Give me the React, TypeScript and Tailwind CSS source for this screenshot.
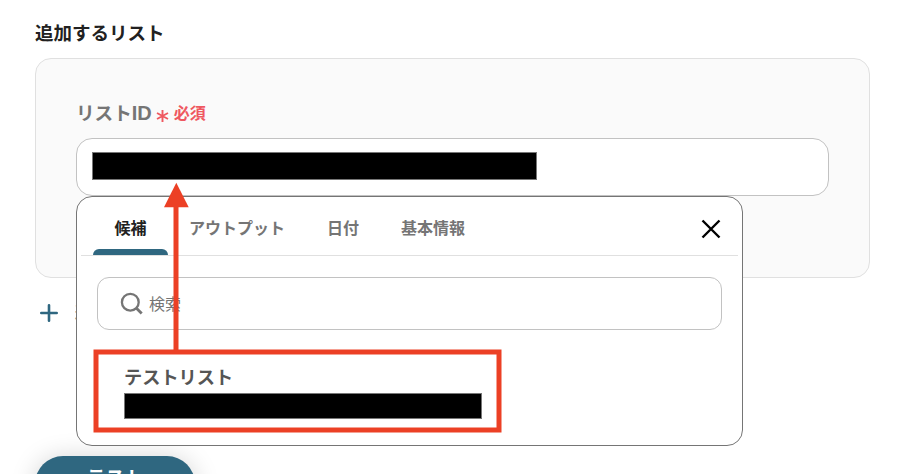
import React from "react";

const tabs = ["アウトプット", "日付", "基本情報"];

function SearchIcon() {
  return (
    <svg className="block h-6 w-6 shrink-0" viewBox="0 0 24 24" fill="none" stroke="#757575" strokeWidth="2.3">
      <circle cx="10.3" cy="10.2" r="8.4" />
      <path d="M16.2 16.1 L21.7 21.6" strokeWidth="2.8" />
    </svg>
  );
}

function Annotation() {
  return (
    <svg className="pointer-events-none absolute left-0 top-0" width="898" height="474" viewBox="0 0 898 474">
      <rect x="96" y="352" width="403" height="78" fill="none" stroke="#ec4025" strokeWidth="5" />
      <path d="M176 352V205" stroke="#ec4025" strokeWidth="5" />
      <path d="M176.3 182.8L188.7 207.3H164Z" fill="#ec4025" />
    </svg>
  );
}

function SuggestionPanel() {
  return (
    <div className="absolute left-[76px] top-[196px] flex h-[250px] w-[667px] flex-col rounded-2xl border border-[#757575] bg-white px-1">
      <div className="flex h-[59px] shrink-0 border-b border-[#e0e0e0] pl-3">
        <div className="flex w-[75px] flex-col justify-between">
          <span className="mt-5 text-center text-[16px] font-bold leading-6 text-[#212121]">候補</span>
          <span className="h-[6px] rounded-t-[6px] bg-[#2f6780]" />
        </div>
        <div className="ml-[21px] mt-5 flex text-[16px] font-bold leading-6 text-[#757575]">
          {tabs.map((tab) => (
            <span key={tab} className="mr-[42px]">{tab}</span>
          ))}
        </div>
        <svg className="ml-auto mr-[17px] mt-[22px] block" width="20" height="20" viewBox="0 0 20 20" fill="none" stroke="#000" strokeWidth="2.4">
          <path d="M1.5 1.5L18.5 18.5M18.5 1.5L1.5 18.5" />
        </svg>
      </div>
      <div className="mx-4 mt-[21px] flex h-[53px] w-[625px] shrink-0 items-center rounded-xl border border-[#c2c2c2] pl-[22px]">
        <SearchIcon />
        <span className="ml-[5px] mt-[3px] text-[16px] leading-6 text-[#757575]">検索</span>
      </div>
      <div className="ml-[43px] mt-[34px]">
        <div className="text-[18.2px] font-bold leading-7 text-[#555]">テストリスト</div>
        <div className="mt-px h-[26px] w-[358px] border border-[#777] bg-black" />
      </div>
    </div>
  );
}

export default function App() {
  return (
    <div className="relative h-[474px] w-[898px] overflow-hidden bg-white pl-[35px] pt-[20px] font-['Liberation_Sans','Noto_Sans_CJK_JP',sans-serif]">
      <h1 className="h-7 text-[18.5px] font-bold leading-7 text-[#212121]">追加するリスト</h1>
      <section className="mt-[10px] h-[220px] w-[835px] rounded-2xl border border-[#e0e0e0] bg-[#fafafa] px-10 pt-10">
        <div className="flex h-7 items-center leading-7">
          <span className="text-[18.6px] font-bold text-[#757575]">
            リスト<span className="text-[20px]">ID</span>
          </span>
          <svg className="ml-1 mt-[5px]" width="13" height="14" viewBox="0 0 13 14" stroke="#ef5860" strokeWidth="1.9">
            <path d="M6.5 1V13M1 4L12 10M12 4L1 10" />
          </svg>
          <span className="ml-[5px] mt-0.5 text-[16px] font-bold text-[#ef5860]">必須</span>
        </div>
        <div className="mt-[11px] h-[58px] w-[753px] rounded-2xl border border-[#c2c2c2] bg-white pl-[15px] pt-[13px]">
          <div className="h-[28px] w-[445px] border border-[#777] bg-black" />
        </div>
      </section>
      <div className="ml-[5px] mt-[21px] flex h-7 items-center">
        <svg width="18" height="18" viewBox="0 0 18 18" stroke="#2f6780" strokeWidth="2.6" strokeLinecap="round">
          <path d="M9 1.3V16.7M1.3 9H16.7" />
        </svg>
        <span className="ml-[17px] text-[16px] font-bold text-[#2f6780]">追加する</span>
      </div>
      <div className="mt-[129px] flex h-14 w-40 items-start justify-center rounded-full bg-[#2f6780] pt-[9px] text-[19px] font-bold leading-7 text-white shadow-[0_2px_26px_rgba(0,0,0,0.18)]">
        テスト
      </div>
      <SuggestionPanel />
      <Annotation />
    </div>
  );
}
